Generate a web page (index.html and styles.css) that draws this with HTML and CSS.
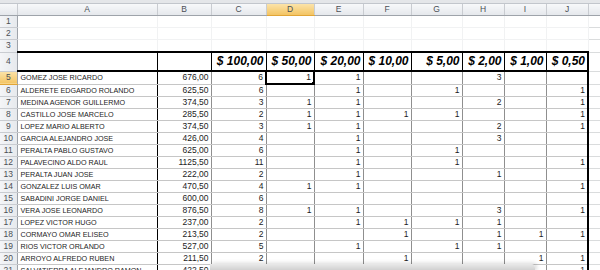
FILE: index.html
```html
<!DOCTYPE html>
<html lang="es">
<head>
    <meta charset="UTF-8">
    <title>Billetes por empleado</title>
    <link rel="stylesheet" href="styles.css">
</head>
<body>
<div class="sheet">
    <div class="topbar"></div>
    <table class="grid">
        <colgroup>
            <col class="w-hd"><col class="w-a"><col class="w-b"><col class="w-c"><col class="w-d"><col class="w-e">
            <col class="w-f"><col class="w-g"><col class="w-h"><col class="w-i"><col class="w-j"><col class="w-k">
        </colgroup>
        <thead>
            <tr class="colhead">
                <th class="corner"></th><th>A</th><th>B</th><th>C</th><th class="active">D</th><th>E</th>
                <th>F</th><th>G</th><th>H</th><th>I</th><th>J</th><th></th>
            </tr>
        </thead>
        <tbody>
            <tr class="blank r1"><th>1</th><td></td><td></td><td></td><td></td><td></td><td></td><td></td><td></td><td></td><td></td><td class="k"></td></tr>
            <tr class="blank r2"><th>2</th><td></td><td></td><td></td><td></td><td></td><td></td><td></td><td></td><td></td><td></td><td class="k"></td></tr>
            <tr class="blank r3"><th>3</th><td></td><td></td><td></td><td></td><td></td><td></td><td></td><td></td><td></td><td></td><td class="k"></td></tr>
            <tr class="titles">
                <th>4</th><td class="name"></td><td></td><td>$ 100,00</td><td>$ 50,00</td><td>$ 20,00</td>
                <td>$ 10,00</td><td>$ 5,00</td><td>$ 2,00</td><td>$ 1,00</td><td class="last">$ 0,50</td><td class="k"></td>
            </tr>
            <tr><th class="active">5</th><td class="name">GOMEZ JOSE RICARDO</td><td>676,00</td><td>6</td><td class="sel">1</td><td>1</td><td></td><td></td><td>3</td><td></td><td class="last"></td><td class="k"></td></tr>
            <tr><th>6</th><td class="name">ALDERETE EDGARDO ROLANDO</td><td>625,50</td><td>6</td><td></td><td>1</td><td></td><td>1</td><td></td><td></td><td class="last">1</td><td class="k"></td></tr>
            <tr><th>7</th><td class="name">MEDINA AGENOR GUILLERMO</td><td>374,50</td><td>3</td><td>1</td><td>1</td><td></td><td></td><td>2</td><td></td><td class="last">1</td><td class="k"></td></tr>
            <tr><th>8</th><td class="name">CASTILLO JOSE MARCELO</td><td>285,50</td><td>2</td><td>1</td><td>1</td><td>1</td><td>1</td><td></td><td></td><td class="last">1</td><td class="k"></td></tr>
            <tr><th>9</th><td class="name">LOPEZ MARIO ALBERTO</td><td>374,50</td><td>3</td><td>1</td><td>1</td><td></td><td></td><td>2</td><td></td><td class="last">1</td><td class="k"></td></tr>
            <tr><th>10</th><td class="name">GARCIA ALEJANDRO JOSE</td><td>426,00</td><td>4</td><td></td><td>1</td><td></td><td></td><td>3</td><td></td><td class="last"></td><td class="k"></td></tr>
            <tr><th>11</th><td class="name">PERALTA PABLO GUSTAVO</td><td>625,00</td><td>6</td><td></td><td>1</td><td></td><td>1</td><td></td><td></td><td class="last"></td><td class="k"></td></tr>
            <tr><th>12</th><td class="name">PALAVECINO ALDO RAUL</td><td>1125,50</td><td>11</td><td></td><td>1</td><td></td><td>1</td><td></td><td></td><td class="last">1</td><td class="k"></td></tr>
            <tr><th>13</th><td class="name">PERALTA JUAN JOSE</td><td>222,00</td><td>2</td><td></td><td>1</td><td></td><td></td><td>1</td><td></td><td class="last"></td><td class="k"></td></tr>
            <tr><th>14</th><td class="name">GONZALEZ LUIS OMAR</td><td>470,50</td><td>4</td><td>1</td><td>1</td><td></td><td></td><td></td><td></td><td class="last">1</td><td class="k"></td></tr>
            <tr><th>15</th><td class="name">SABADINI JORGE DANIEL</td><td>600,00</td><td>6</td><td></td><td></td><td></td><td></td><td></td><td></td><td class="last"></td><td class="k"></td></tr>
            <tr><th>16</th><td class="name">VERA JOSE LEONARDO</td><td>876,50</td><td>8</td><td>1</td><td>1</td><td></td><td></td><td>3</td><td></td><td class="last">1</td><td class="k"></td></tr>
            <tr><th>17</th><td class="name">LOPEZ VICTOR HUGO</td><td>237,00</td><td>2</td><td></td><td>1</td><td>1</td><td>1</td><td>1</td><td></td><td class="last"></td><td class="k"></td></tr>
            <tr><th>18</th><td class="name">CORMAYO OMAR ELISEO</td><td>213,50</td><td>2</td><td></td><td></td><td>1</td><td></td><td>1</td><td>1</td><td class="last">1</td><td class="k"></td></tr>
            <tr><th>19</th><td class="name">RIOS VICTOR ORLANDO</td><td>527,00</td><td>5</td><td></td><td>1</td><td></td><td>1</td><td>1</td><td></td><td class="last"></td><td class="k"></td></tr>
            <tr><th>20</th><td class="name">ARROYO ALFREDO RUBEN</td><td>211,50</td><td>2</td><td></td><td></td><td>1</td><td></td><td></td><td>1</td><td class="last">1</td><td class="k"></td></tr>
            <tr><th>21</th><td class="name">SALVATIERRA ALEJANDRO RAMON</td><td>422,50</td><td>4</td><td></td><td>1</td><td>1</td><td></td><td>1</td><td></td><td class="last">1</td><td class="k"></td></tr>
        </tbody>
    </table>
    <div class="shadow"></div>
</div>
</body>
</html>
```

FILE: styles.css
```css
body {
    margin: 0;
    background: #fff;
    font-family: 'Liberation Sans', Arial, sans-serif;
    overflow: hidden;
}
.sheet {
    position: relative;
    width: 600px;
    height: 270px;
    overflow: hidden;
}
.topbar {
    height: 3px;
    background: #e4e6e9;
    border-bottom: 1px solid #c2c6cc;
}
.grid {
    border-collapse: collapse;
    table-layout: fixed;
    width: 660px;
}
.w-hd { width: 17px; }
.w-a { width: 140px; }
.w-b { width: 54px; }
.w-c { width: 55px; }
.w-d { width: 48px; }
.w-e { width: 49px; }
.w-f { width: 48px; }
.w-g { width: 51px; }
.w-h { width: 42px; }
.w-i { width: 42px; }
.w-j { width: 42px; }
.w-k { width: 72px; }

.grid th, .grid td {
    padding: 0 2px;
    height: 11px;
    line-height: 11px;
    white-space: nowrap;
    overflow: hidden;
}

/* column letters */
.colhead th {
    background: linear-gradient(#f7f8fa, #e5e8ec);
    border-right: 1px solid #c9ccd1;
    border-bottom: 1px solid #9ea3aa;
    color: #4b4f55;
    font-size: 8.5px;
    font-weight: normal;
    text-align: center;
}
.colhead th.active, tbody th.active {
    background: linear-gradient(#fbe3a9, #f3c463);
    border-bottom-color: #e1a536;
}

/* row numbers */
tbody th {
    background: linear-gradient(90deg, #f4f5f7, #e6e9ed);
    border-right: 1px solid #9ea3aa;
    border-bottom: 1px solid #c9ccd1;
    color: #4b4f55;
    font-size: 8.5px;
    font-weight: normal;
    text-align: center;
    padding: 0;
}

td {
    border-right: 1px solid #8f8f8f;
    border-bottom: 1px solid #c6c6c6;
    color: #1c1c1c;
    font-size: 8.5px;
    text-align: right;
}
td.name {
    border-right: 1px solid #000;
    font-size: 7.2px;
    text-align: left;
    padding-left: 3px;
}
td.last {
    border-right: 2px solid #000;
}
td.k {
    border-right: 1px solid #dadcdd;
    border-bottom: 1px solid #dadcdd;
}

/* empty top rows */
.blank td {
    border-right: 1px solid #f1f2f3;
    border-bottom: 1px solid #f1f2f3;
}
.blank td.k {
    border-color: #dadcdd;
}
.r2 th, .r2 td {
    height: 10px;
}

/* denomination headings */
.titles th, .titles td {
    height: 17px;
    line-height: 17px;
}
.titles td {
    border-top: 2px solid #000;
    border-bottom: 2px solid #000;
    border-right: 1px solid #000;
    font-size: 12px;
    font-weight: bold;
    font-style: italic;
    color: #000;
}
.titles td.last {
    border-right: 2px solid #000;
}
.titles td.k {
    border-top: 1px solid #dadcdd;
    border-bottom: 1px solid #dadcdd;
}

/* selected cell */
td.sel {
    position: relative;
    border: 2px solid #000;
}
td.sel::after {
    content: "";
    position: absolute;
    right: -3px;
    bottom: -3px;
    width: 3px;
    height: 3px;
    background: #000;
    border: 1px solid #fff;
}

.shadow {
    position: absolute;
    left: 210px;
    top: 264px;
    width: 325px;
    height: 8px;
    background: linear-gradient(#e9e9e9, #c9c9c9);
    border-radius: 0 4px 0 0;
    box-shadow: 2px -1px 4px rgba(0, 0, 0, 0.15);
}
```
